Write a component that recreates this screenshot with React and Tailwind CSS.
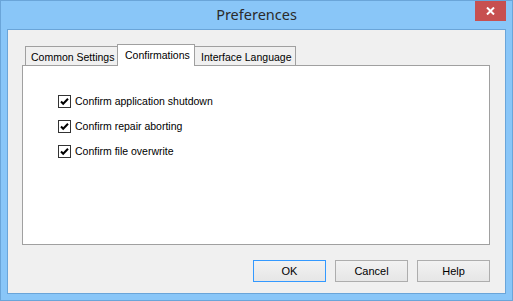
import React from "react";

const OPTIONS = [
  "Confirm application shutdown",
  "Confirm repair aborting",
  "Confirm file overwrite",
];

function CheckBox() {
  return (
    <svg width="13" height="13" viewBox="0 0 13 13" className="shrink-0">
      <rect x="0.5" y="0.5" width="12" height="12" fill="#fff" stroke="#333" />
      <path d="M3 6.5 L5.2 8.8 L10 3.8" fill="none" stroke="#000" strokeWidth="2" />
    </svg>
  );
}

function Button({ children, focused }) {
  return (
    <button
      className={`w-[73px] h-[22px] border bg-gradient-to-b from-[#f2f2f2] to-[#e6e6e6] text-[11px] text-black ${
        focused ? "border-[#3399ff]" : "border-[#adadad]"
      }`}
    >
      {children}
    </button>
  );
}

export default function App() {
  return (
    <div
      className="w-[513px] h-[301px] border border-[#6aa5d9] bg-[#89c6f8] flex flex-col"
      style={{ fontFamily: '"Liberation Sans", Arial, sans-serif' }}
    >
      {/* title bar */}
      <div className="relative h-[28px] flex items-center justify-center">
        <span
          className="text-[14.5px] text-[#2b2b2b] -mt-[1px]"
          style={{ fontFamily: '"Noto Sans", sans-serif' }}
        >
          Preferences
        </span>
        <div className="absolute right-[6px] top-0 w-[31px] h-[20px] bg-[#c75050] flex items-center justify-center">
          <svg width="9" height="8" viewBox="0 0 9 8">
            <path d="M1 0.5 L8 7.5 M8 0.5 L1 7.5" stroke="#fff" strokeWidth="2" />
          </svg>
        </div>
      </div>

      {/* client area */}
      <div className="flex-1 mx-[6px] mb-[6px] border border-[#6aa5d9] bg-[#f0f0f0] flex flex-col pl-[14px] pr-[15px] pt-[14px]">
        <div className="flex items-end h-[21px] pl-[3px] text-[10.5px] text-black whitespace-nowrap">
          <div className="w-[92px] h-[19px] border-l border-t border-[#a0a0a0] pl-[5px] pt-[3px]">
            Common Settings
          </div>
          <div className="relative z-10 w-[78px] h-[22px] -mb-px border-l border-t border-r border-[#a0a0a0] bg-white pl-[7px] pt-[3px]">
            Confirmations
          </div>
          <div className="w-[101px] h-[19px] border-t border-r border-[#a0a0a0] pl-[6px] pt-[3px]">
            Interface Language
          </div>
        </div>

        <div className="w-[468px] h-[180px] border border-[#a0a0a0] bg-white pl-[35px] pt-[29px] flex flex-col gap-[12px] text-[10.5px] text-black">
          {OPTIONS.map((o) => (
            <label key={o} className="flex items-center gap-[4px] h-[13px]">
              <CheckBox />
              <span>{o}</span>
            </label>
          ))}
        </div>

        <div className="flex justify-end gap-[9px] mt-[15px]">
          <Button focused>OK</Button>
          <Button>Cancel</Button>
          <Button>Help</Button>
        </div>
      </div>
    </div>
  );
}
